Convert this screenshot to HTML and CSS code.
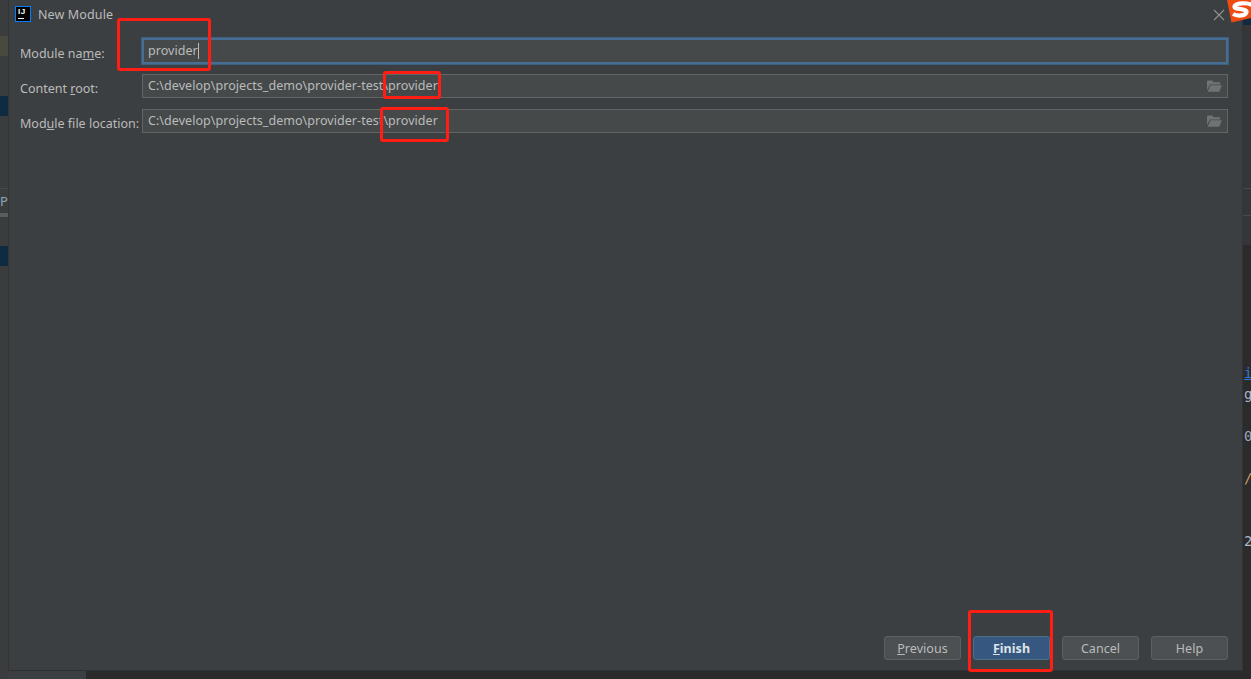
FILE: index.html
```html
<!DOCTYPE html>
<html lang="en">
<head>
<meta charset="utf-8">
<title>New Module</title>
<link rel="stylesheet" href="styles.css">
</head>
<body>
<div class="desktop">
  <div class="ide-left">
    <div class="strip s36"></div>
    <div class="strip olive"></div>
    <div class="strip s40"></div>
    <div class="strip navy"></div>
    <div class="strip s72"></div>
    <div class="strip rule"></div>
    <div class="strip peek">P</div>
    <div class="strip bar"></div>
    <div class="strip s29"></div>
    <div class="strip navy"></div>
  </div>
  <div class="ide-mid">
    <div class="spacer"></div>
    <div class="bottom">
      <div class="bottom-light"></div>
      <div class="bottom-dark"></div>
    </div>
  </div>
  <div class="ide-right">
    <div class="r-navy"></div>
    <div class="r-panel"><div class="r-gap163"></div><div class="rule"></div><div class="r-gap26"></div><div class="rule"></div></div>
    <div class="editor">
      <div class="code link">i</div>
      <div class="code">g</div>
      <div class="code">&nbsp;</div>
      <div class="code num">0</div>
      <div class="code">&nbsp;</div>
      <div class="code slash">/</div>
      <div class="code">&nbsp;</div>
      <div class="code">&nbsp;</div>
      <div class="code">2</div>
    </div>
  </div>

  <section class="dialog">
    <header class="titlebar">
      <span class="ij"><span class="ij-text">IJ</span><span class="ij-bar"></span></span>
      <span class="title">New Module</span>
      <svg class="close" width="12" height="12" viewBox="0 0 12 12"><path d="M1 1l10 10M11 1L1 11" stroke="#8f9192" stroke-width="1.1" fill="none"/></svg>
    </header>

    <div class="form">
      <label class="label">Module na<u>m</u>e:</label>
      <div class="field focus"><span>provider</span><i class="caret"></i></div>

      <label class="label">Content <u>r</u>oot:</label>
      <div class="field"><span>C:\develop\projects_demo\provider-test\provider</span>
        <svg class="folder" width="15" height="12" viewBox="0 0 16 12"><path d="M0 1.2C0 .5.5 0 1.2 0h4.3l1.7 2H14v2.4H3.2L0 10.5z" fill="#6f7375"/><path d="M3.8 5.2H16L13 12H.6z" fill="#6f7375"/></svg>
      </div>

      <label class="label">Mod<u>u</u>le file location:</label>
      <div class="field"><span>C:\develop\projects_demo\provider-test\provider</span>
        <svg class="folder" width="15" height="12" viewBox="0 0 16 12"><path d="M0 1.2C0 .5.5 0 1.2 0h4.3l1.7 2H14v2.4H3.2L0 10.5z" fill="#6f7375"/><path d="M3.8 5.2H16L13 12H.6z" fill="#6f7375"/></svg>
      </div>
    </div>

    <footer class="footer">
      <button class="btn"><u>P</u>revious</button>
      <button class="btn primary"><u>F</u>inish</button>
      <button class="btn">Cancel</button>
      <button class="btn">Help</button>
    </footer>

    <div class="mark m1"></div>
    <div class="mark m2"></div>
    <div class="mark m3"></div>
    <div class="mark m4"></div>
  </section>

  <svg class="sogou" width="24" height="23" viewBox="0 0 24 23">
    <path d="M0 0H24V18L4.500 22.500z" fill="#f04c12"/>
    <path d="M25 5C20 2.500 8.500 2.500 7.500 6.500 6.800 10 20 8 19.500 12 19 16 10.500 16.500 6 14" fill="none" stroke="#fff" stroke-width="4.200"/>
  </svg>
</div>
</body>
</html>
```

FILE: styles.css
```css
* { box-sizing: border-box; }
html, body { margin: 0; padding: 0; background: #3c3f41; }
.desktop {
  position: relative;
  display: flex;
  width: 1251px;
  height: 679px;
  overflow: hidden;
  background: #3c3f41;
  font-family: "Noto Sans", "Open Sans", sans-serif;
  font-size: 12.500px;
  letter-spacing: .05px;
  color: #bbbbbb;
}

/* IDE window peeking out behind the dialog */
.ide-left { width: 8px; flex: none; display: flex; flex-direction: column; overflow: hidden; background: #3a3c3e; }
.strip { flex: none; }
.s36 { height: 36px; }
.olive { height: 20px; background: #49493f; }
.s40 { height: 40px; }
.navy { height: 20px; background: #0f2b41; }
.s72 { height: 72px; }
.rule { height: 1px; background: #48494a; }
.peek { height: 24px; padding-top: 2px; line-height: 20px; font-size: 13px; color: #8fa6b8; }
.bar { height: 4px; background: #5a5c5e; }
.s29 { height: 29px; }

.ide-mid { flex: 1; display: flex; flex-direction: column; }
.spacer { flex: 1; }
.bottom { height: 8px; display: flex; }
.bottom-light { width: 78px; background: #3c3f41; }
.bottom-dark { flex: 1; background: #2b2b2b; }

.ide-right { width: 8px; flex: none; display: flex; flex-direction: column; overflow: hidden; background: #343638; }
.r-navy { height: 25px; background: #0f2b41; flex: none; }
.r-panel { height: 220px; flex: none; }
.r-gap163 { height: 163px; }
.r-gap26 { height: 26px; }
.editor { flex: 1; background: #2b2b2b; padding: 118px 0 0 1px; }
.code { height: 21px; line-height: 21px; font-family: "DejaVu Sans Mono", monospace; font-size: 14px; color: #a9b7c6; white-space: nowrap; }
.link { color: #287bde; text-decoration: underline; }
.num { color: #9aa7b5; }
.slash { color: #cc9a6a; }

/* Dialog */
.dialog {
  position: absolute;
  left: 8px;
  top: 0;
  width: 1235px;
  height: 671px;
  display: flex;
  flex-direction: column;
  background: #3c3f41;
  border-left: 1px solid #323436;
  border-bottom: 1px solid #2f3133;
  border-right: 1px solid #323436;
}
.titlebar { height: 38px; flex: none; display: flex; align-items: flex-start; padding: 6px 17px 0 6px; }
.ij {
  width: 16px; height: 16px; flex: none;
  display: flex; flex-direction: column;
  padding: 1px 0 0 2px;
  background: #000;
  border: 1px solid #087cfa;
}
.ij-text { font-family: "Liberation Sans", sans-serif; font-weight: 700; font-size: 8px; line-height: 8px; color: #fff; letter-spacing: .5px; }
.ij-bar { width: 6px; height: 1px; margin-top: 2px; background: #fff; }
.title { margin-left: 7px; line-height: 18px; font-size: 12.500px; letter-spacing: .12px; }
.close { margin-left: auto; margin-top: 3px; }

.form {
  display: grid;
  grid-template-columns: 122px 1fr;
  grid-template-rows: 26px 24px 25px;
  row-gap: 10px;
  padding: 0 14px 0 11px;
}
.form > .field:nth-of-type(3) { margin-top: 1px; }
.form > .label:nth-of-type(3) { margin-top: 1px; }
.label { padding-top: 5px; line-height: 22px; white-space: nowrap; align-self: center; letter-spacing: 0; }
.field {
  display: flex;
  align-items: center;
  min-width: 0;
  padding: 0 5px;
  background: #45494a;
  border: 1px solid #646464;
  line-height: 20px;
  position: relative;
}
.field span { white-space: nowrap; }
.field.focus { border: 2px solid #466d94; box-shadow: 0 0 0 1px #3f5f7f; padding: 0 4px; }
.caret { width: 1px; height: 16px; background: #bbbbbb; margin-left: 0; }
.folder { margin-left: auto; margin-right: 0; }

.footer {
  margin-top: auto;
  display: flex;
  justify-content: flex-end;
  gap: 12px;
  padding: 0 14px 10px 0;
}
.btn {
  width: 77px;
  height: 24px;
  padding: 2px 0 0;
  font: inherit;
  letter-spacing: inherit;
  line-height: 20px;
  color: #bbbbbb;
  background: #4c5052;
  border: 1px solid #5e6060;
  border-radius: 3px;
}
.primary { font-weight: 700; color: #dfe3e8; background: #365880; border-color: #4c708c; }

/* Red annotations drawn over the dialog */
.mark { position: absolute; border: 3px solid #ff1d14; border-radius: 3px; }
.m1 { left: 108px; top: 18px; width: 94px; height: 53px; }
.m2 { left: 374px; top: 71px; width: 58px; height: 28px; }
.m3 { left: 371px; top: 107px; width: 69px; height: 35px; }
.m4 { left: 959px; top: 610px; width: 85px; height: 62px; }

.sogou { position: absolute; right: 0; top: 0; }
```
